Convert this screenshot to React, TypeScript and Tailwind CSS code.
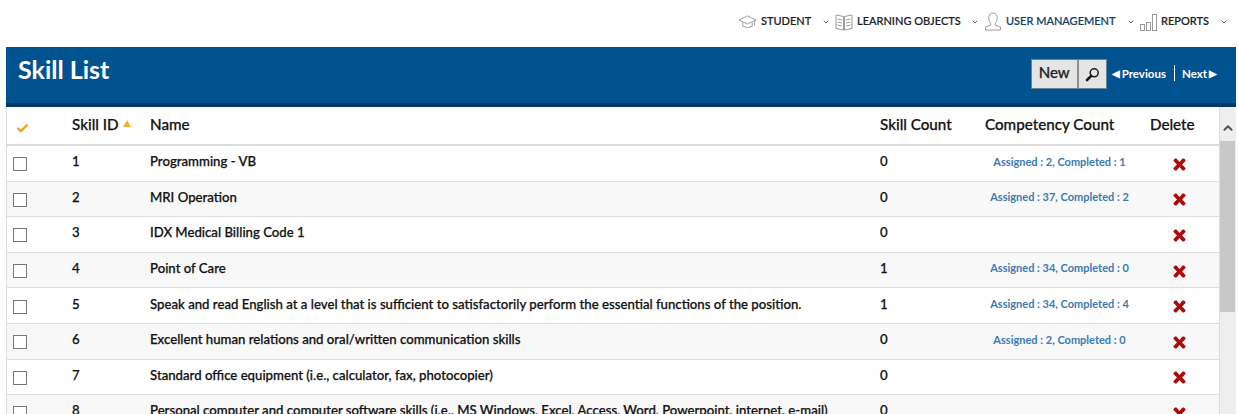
import { Check, ChevronDown, ChevronUp } from 'lucide-react'

// ── Top nav icons ──────────────────────────────────────────────────────────
function CapIcon() {
  return (
    <svg width="19" height="16" viewBox="0 0 20 16" fill="none" stroke="#9a9a9a" strokeWidth="1">
      <path d="M1 6 L10 1.5 L19 6 L10 10 Z" />
      <path d="M5 8.5 V12.5 Q10 15.5 15 12.5 V8.5" />
      <path d="M17.5 7 V12" />
    </svg>
  )
}

function BookIcon() {
  return (
    <svg width="18" height="18" viewBox="0 0 18 18" fill="none" stroke="#9a9a9a" strokeWidth="1">
      <path d="M1 2 L8.5 3.5 V17 L1 15.5 Z" />
      <path d="M17 2 L9.5 3.5 V17 L17 15.5 Z" />
      <path d="M2.5 6 L7 7 M2.5 9 L7 10 M2.5 12 L7 13 M15.5 6 L11 7 M15.5 9 L11 10 M15.5 12 L11 13" />
    </svg>
  )
}

function UserIcon() {
  return (
    <svg width="18" height="19" viewBox="0 0 18 19" fill="none" stroke="#9a9a9a" strokeWidth="1">
      <path d="M9 1 C5.8 1 4.5 3.5 4.8 6.5 C5 9 6 10.5 6.8 11.5 V13 L1.5 15 V18 H16.5 V15 L11.2 13 V11.5 C12 10.5 13 9 13.2 6.5 C13.5 3.5 12.2 1 9 1 Z" />
    </svg>
  )
}

function BarsIcon() {
  return (
    <svg width="17" height="18" viewBox="0 0 17 18" fill="none" stroke="#9a9a9a" strokeWidth="1">
      <rect x="0.5" y="11.5" width="4" height="6" />
      <rect x="6.5" y="9.5" width="4" height="8" />
      <rect x="12.5" y="1.5" width="4" height="16" />
    </svg>
  )
}

function LensIcon() {
  return (
    <svg width="15" height="15" viewBox="0 0 15 15" fill="none" stroke="#1a1a1a">
      <circle cx="9.2" cy="5.8" r="4" strokeWidth="1.5" />
      <path d="M6.2 8.8 L2 13" strokeWidth="2.6" strokeLinecap="round" />
    </svg>
  )
}

function DeleteIcon() {
  return (
    <svg width="13" height="13" viewBox="0 0 13 13" fill="#a80c0c">
      <path d="M0.5 2 L2 0.5 L3.5 0.5 L6.5 4 L9.5 0.5 L11 0.5 L12.5 2 L12.5 3 L9 6.5 L12.5 10 L12.5 11 L11 12.5 L9.5 12.5 L6.5 9 L3.5 12.5 L2 12.5 L0.5 11 L0.5 10 L4 6.5 L0.5 3 Z" />
    </svg>
  )
}

const navItems = [
  { label: 'STUDENT', icon: <CapIcon />, width: 'w-[97px]', active: false },
  { label: 'LEARNING OBJECTS', icon: <BookIcon />, width: 'w-[149px]', active: false },
  { label: 'USER MANAGEMENT', icon: <UserIcon />, width: 'w-[156px]', active: true },
  { label: 'REPORTS', icon: <BarsIcon />, width: 'w-[93px]', active: false },
]

const rows = [
  { id: 1, name: 'Programming - VB', skills: 0, comp: 'Assigned : 2, Completed : 1' },
  { id: 2, name: 'MRI Operation', skills: 0, comp: 'Assigned : 37, Completed : 2' },
  { id: 3, name: 'IDX Medical Billing Code 1', skills: 0, comp: '' },
  { id: 4, name: 'Point of Care', skills: 1, comp: 'Assigned : 34, Completed : 0' },
  { id: 5, name: 'Speak and read English at a level that is sufficient to satisfactorily perform the essential functions of the position.', skills: 1, comp: 'Assigned : 34, Completed : 4' },
  { id: 6, name: 'Excellent human relations and oral/written communication skills', skills: 0, comp: 'Assigned : 2, Completed : 0' },
  { id: 7, name: 'Standard office equipment (i.e., calculator, fax, photocopier)', skills: 0, comp: '' },
  { id: 8, name: 'Personal computer and computer software skills (i.e., MS Windows, Excel, Access, Word, Powerpoint, internet, e-mail)', skills: 0, comp: '' },
]

export default function App() {
  return (
    <div className="h-[414px] w-[1238px] overflow-hidden bg-white font-['Lato',sans-serif] text-[#111]">
      {/* Top nav */}
      <div className="flex h-[47px] items-start justify-end pr-[5px] pt-[12px]">
        {navItems.map(item => (
          <div key={item.label} className={`flex h-[19px] items-center gap-[4px] pr-[5px] ${item.width}`}>
            {item.icon}
            <span className={`whitespace-nowrap text-[11px] font-medium [-webkit-text-stroke:0.2px] ${item.active ? 'text-[#0f3f66]' : 'text-[#222]'}`}>
              {item.label}
            </span>
            <ChevronDown size={8} strokeWidth={3} className="ml-auto text-[#666]" />
          </div>
        ))}
      </div>

      {/* Blue title bar */}
      <div className="ml-[6px] mr-[2px] flex h-[60px] items-start justify-between border-b-[4px] border-[#033a5f] bg-[#01538f] pl-[12px] pr-[19px] text-white">
        <h1 className="mt-[5px] text-[25px] font-bold leading-[34px]">Skill List</h1>
        <div className="mt-[12px] flex items-start">
          <div className="flex h-[30px] border border-[#6d8197] bg-[#e4e4e4] text-[#222]">
            <span className="flex w-[45px] items-center justify-center pb-[4px] text-[15px] font-medium [-webkit-text-stroke:0.25px]">New</span>
            <span className="flex w-[29px] items-center justify-center border-l-2 border-[#8a9099]">
              <LensIcon />
            </span>
          </div>
          <div className="mt-[1px] flex items-center text-[11.5px] font-bold">
            <span className="ml-[5px] flex items-center gap-[2px] pt-[5px]"><span className="text-[10px]">◀</span>Previous</span>
            <span className="ml-[8px] mt-[3px] h-[16px] w-[1px] bg-white" />
            <span className="ml-[7px] flex items-center gap-[2px] pt-[5px]">Next<span className="text-[10px]">▶</span></span>
          </div>
        </div>
      </div>

      {/* Table + scrollbar */}
      <div className="ml-[6px] mr-[2px] flex h-[307px] border-l border-[#ddd]">
        <div className="w-[1213px] shrink-0 overflow-hidden border-r border-[#ddd]">
          <div className="flex h-[39px] items-center border-b-[2px] border-[#ddd] bg-white pb-[3px] text-[15.2px] font-medium [-webkit-text-stroke:0.25px]">
            <div className="w-[65px] pl-[9px] pt-[9px]"><Check size={13} strokeWidth={4.5} className="text-[#f0a020]" /></div>
            <div className="flex w-[78px] items-center gap-[4px]">
              Skill ID
              <span className="h-0 w-0 border-x-[4px] border-b-[7px] border-x-transparent border-b-[#f0b030]" />
            </div>
            <div className="w-[730px]">Name</div>
            <div className="w-[105px]">Skill Count</div>
            <div className="w-[165px]">Competency Count</div>
            <div className="w-[69px]">Delete</div>
          </div>
          {rows.map(r => (
            <div key={r.id} className="flex h-[35.6px] items-center border-b border-[#ddd] text-[13.2px] font-medium odd:bg-[#f8f8f8]">
              <div className="w-[65px] pl-[6px]">
                <span className="mt-[2px] block h-[14px] w-[14px] border border-[#777] bg-white" />
              </div>
              <div className="w-[78px] pb-[2.5px] [-webkit-text-stroke:0.25px]">{r.id}</div>
              <div className="w-[730px] whitespace-nowrap pb-[2.5px] [-webkit-text-stroke:0.25px]">{r.name}</div>
              <div className="w-[105px] pb-[2.5px] [-webkit-text-stroke:0.25px]">{r.skills}</div>
              <div className="w-[165px] pb-[3px] pr-[16px] text-center text-[11px] font-bold text-[#3b7bb0]">{r.comp}</div>
              <div className="w-[69px] pl-[23px] pt-[2px]"><DeleteIcon /></div>
            </div>
          ))}
        </div>
        {/* Scrollbar */}
        <div className="flex w-[16px] shrink-0 flex-col bg-[#eeeeee]">
          <div className="flex h-[34px] items-center justify-center pt-[8px]">
            <ChevronUp size={14} strokeWidth={3.5} className="text-[#555]" />
          </div>
          <div className="h-[171px] w-[15px] bg-[#c8c8c8]" />
        </div>
      </div>
    </div>
  )
}
